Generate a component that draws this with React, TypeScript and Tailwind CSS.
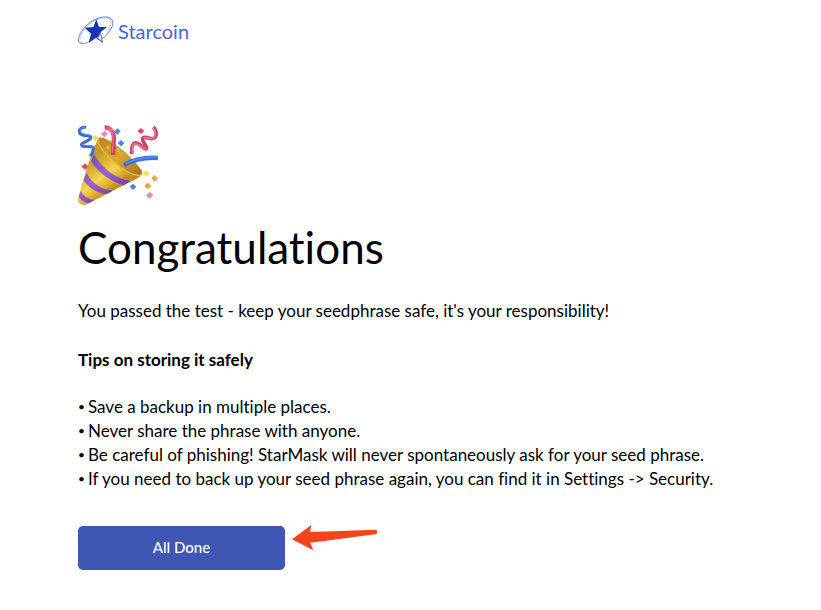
const tips = [
  'Save a backup in multiple places.',
  'Never share the phrase with anyone.',
  'Be careful of phishing! StarMask will never spontaneously ask for your seed phrase.',
  'If you need to back up your seed phrase again, you can find it in Settings -> Security.',
];

function StarcoinLogo() {
  return (
    <header className="flex h-7 items-center gap-1">
      <svg className="h-7 w-9" viewBox="24 21 108 84" fill="none" aria-hidden="true">
        <path d="M38 103C22 106 22 88 34 69C49 43 83 21 111 24C133 27 134 47 116 70C110 78 104 84 97 89" stroke="#6580d8" strokeWidth="3" />
        <path d="M38 103C25 101 29 83 40 67C55 43 83 26 108 27C128 29 127 48 111 68" stroke="#9eafea" strokeWidth="2" />
        <path d="M36 103C45 104 51 101 57 98" stroke="#4a68cf" strokeWidth="2" />
        <path d="M79 31L87 54H111L92 69L99 101L77 87L56 102L63 74L44 56L70 54Z" fill="#1636b3" />
        <path d="M90 70L96 97L79 84L87 84Z" fill="#e5eafb" />
      </svg>
      <span className="pt-0.5 font-['Lato'] text-[20px] leading-6 text-[#4a66cf]">Starcoin</span>
    </header>
  );
}

function PartyPopper() {
  return (
    <svg className="h-20 w-20" viewBox="24 21 240 240" fill="none" role="img" aria-label="Party popper">
      <defs>
        <linearGradient id="cone" x1="55" y1="135" x2="120" y2="220" gradientUnits="userSpaceOnUse">
          <stop stopColor="#c99a28" />
          <stop offset=".3" stopColor="#e3b832" />
          <stop offset=".55" stopColor="#f3d654" />
          <stop offset=".8" stopColor="#dfae30" />
          <stop offset="1" stopColor="#c08a24" />
        </linearGradient>
        <linearGradient id="mouth" x1="90" y1="65" x2="200" y2="175" gradientUnits="userSpaceOnUse">
          <stop stopColor="#bd8620" />
          <stop offset=".5" stopColor="#dca72c" />
          <stop offset="1" stopColor="#a9741d" />
        </linearGradient>
        <linearGradient id="band" x1="60" y1="130" x2="125" y2="220" gradientUnits="userSpaceOnUse">
          <stop stopColor="#7d4dbd" />
          <stop offset=".5" stopColor="#a064d2" />
          <stop offset="1" stopColor="#7b43b0" />
        </linearGradient>
        <linearGradient id="redRibbon" x1="105" y1="30" x2="136" y2="45" gradientUnits="userSpaceOnUse">
          <stop stopColor="#cb3e5d" />
          <stop offset=".6" stopColor="#ec6684" />
          <stop offset="1" stopColor="#cf4262" />
        </linearGradient>
        <clipPath id="coneClip">
          <path d="M87 60C76 67 28 218 24 247Q25 263 47 260L198 183Q216 177 216 163C201 132 112 53 87 60Z" />
        </clipPath>
      </defs>
      <g clipPath="url(#coneClip)">
        <path d="M20 50H220V265H20Z" fill="url(#cone)" />
        <path d="M72 107C88 142 137 184 181 188L163 202C116 190 75 154 64 130Z" fill="url(#band)" />
        <path d="M50 165C61 192 94 216 130 218L112 229C75 225 48 202 41 185Z" fill="url(#band)" />
        <path d="M32 218C39 233 54 244 76 246L58 257C41 253 31 243 26 236Z" fill="url(#band)" />
      </g>
      <path d="M87 60C111 53 201 128 216 163C219 183 186 172 151 147C109 117 72 73 87 60Z" fill="url(#mouth)" />
      <path d="M87 61C74 74 112 118 151 147C181 169 211 180 215 167" stroke="#e6bd43" strokeWidth="4" />
      <path d="M87 60C111 53 201 128 216 163" stroke="#a8741d" strokeWidth="2" />
      <path d="M144 90l7 8l-5 6l-8-7zM178 132l7 5l-5 5l-8-4zM112 82l6 6l-4 7l-7-7z" fill="#e5b73c" />
      <path d="M104 28C124 28 135 48 131 73L129 111" stroke="url(#redRibbon)" strokeWidth="13" />
      <path d="M110 29C125 33 132 52 129 73L127 104" stroke="#ee7c97" strokeWidth="3" />
      <path d="M162 141C190 126 226 117 264 120" stroke="#3970d8" strokeWidth="13" />
      <path d="M168 136C198 122 230 116 264 117" stroke="#5a90ec" strokeWidth="4" />
      <path d="M48 28C31 25 21 42 33 49C45 57 66 50 62 60C58 71 30 73 35 82C41 91 70 80 70 91C70 99 66 108 61 115" stroke="#376bd6" strokeWidth="9" strokeLinejoin="round" />
      <path d="M43 27C31 29 28 41 36 45C47 51 63 49 65 55M36 79C48 84 68 81 72 88" stroke="#5f93ee" strokeWidth="3" />
      <path d="M186 108C184 91 185 78 195 75C208 71 222 98 229 92C235 86 211 68 219 60C228 52 249 70 256 57C261 47 258 36 250 27" stroke="#cf4263" strokeWidth="11" strokeLinejoin="round" />
      <path d="M188 105C185 90 188 80 195 77C207 75 222 96 227 91M220 60C231 55 247 68 254 56C258 46 255 35 249 29" stroke="#ee7f99" strokeWidth="4" />
      <path d="M142 31l10 9l-10 10l-10-9zM153 66l10 10l-10 9l-10-9zM189 197l10 9l-10 10l-10-10z" fill="#4686e9" />
      <path d="M76 51l10 9l-10 10l-10-9zM228 157l10 10l-10 9l-10-9z" fill="#f5df54" />
      <path d="M104 38l10 10l-11 10l-10-10zM239 221l11 9l-10 12l-12-9z" fill="#eb88b1" />
      <path d="M213 30l10 9l-10 9l-11-9zM45 136l10 9l-9 11l-12-10z" fill="#d94c70" />
      <path d="M253 171l11 10l-10 10l-10-10zM233 194l11 9l-10 11l-11-10z" fill="#ef9f45" />
    </svg>
  );
}

function PointerArrow() {
  return (
    <svg className="-mt-0.5 ml-1.5 h-[27px] w-[88px] shrink-0" viewBox="33 27 264 81" aria-hidden="true">
      <path d="M36 73L94 30L90 51L286 44Q292 44 292 51Q292 57 286 58L91 83L100 106Z" fill="#f5431c" />
    </svg>
  );
}

export default function App() {
  return (
    <main className="min-h-screen bg-white px-[78px] pt-4 pb-10 font-['Lato','Liberation_Sans',sans-serif] text-[17px] text-black [font-variant-ligatures:none]">
      <StarcoinLogo />
      <section className="mt-20 pt-px">
        <PartyPopper />
        <h1 className="mt-3 text-[44px] leading-[60px]">Congratulations</h1>
        <p className="mt-[22px] leading-6">
          You passed the test - keep your seedphrase safe, it's your responsibility!
        </p>
        <h2 className="mt-[25px] font-bold leading-6">Tips on storing it safely</h2>
        <ul className="mt-[23px]">
          {tips.map((tip) => (
            <li key={tip} className="flex leading-6">
              <span className="w-2.5 shrink-0 text-xs leading-6">•</span>
              <span>{tip}</span>
            </li>
          ))}
        </ul>
        <div className="mt-[35px] flex items-start">
          <button type="button" className="h-11 w-[207px] shrink-0 rounded-[5px] bg-[#4056b4] pb-0.5 text-[15px] font-medium text-white">
            All Done
          </button>
          <PointerArrow />
        </div>
      </section>
    </main>
  );
}
